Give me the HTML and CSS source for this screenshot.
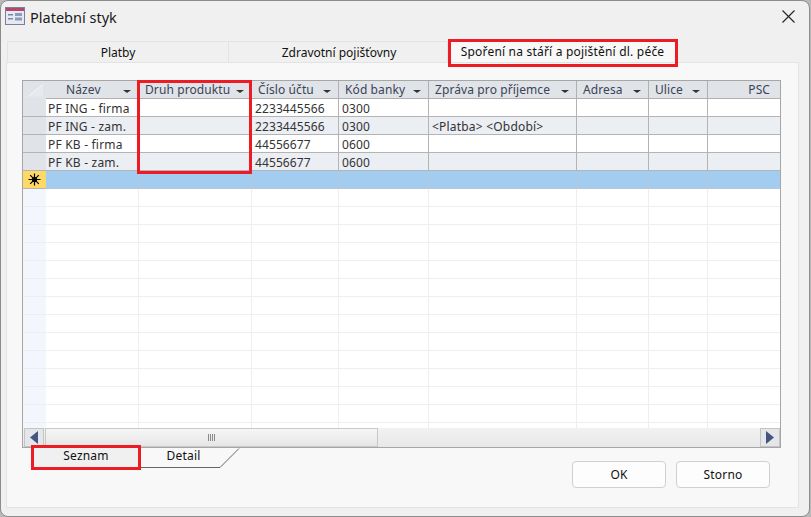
FILE: index.html
```html
<!DOCTYPE html>
<html lang="cs">
<head>
<meta charset="utf-8">
<title>Platební styk</title>
<link rel="stylesheet" href="styles.css">
</head>
<body>
<div class="window">
  <header class="titlebar">
    <svg class="appicon" width="20" height="20" viewBox="0 0 20 20">
      <rect x="0.5" y="1.5" width="19" height="17" fill="#e6e9f2" stroke="#7d7f96"/>
      <rect x="1" y="2" width="18" height="3" fill="#b5476a"/>
      <rect x="3" y="8" width="5" height="1.5" fill="#7b87a8"/>
      <rect x="3" y="12" width="5" height="1.5" fill="#7b87a8"/>
      <rect x="10" y="7" width="7" height="3" fill="#8b9bb8"/>
      <rect x="10" y="11.5" width="7" height="3" fill="#8b9bb8"/>
    </svg>
    <span class="title">Platební styk</span>
    <svg class="close" width="13" height="13" viewBox="0 0 13 13"><path d="M.5.5l12 12M12.5.5l-12 12" stroke="#222" stroke-width="1.1" fill="none"/></svg>
  </header>
  <nav class="tabs">
    <div class="tab tab-a">Platby</div>
    <div class="tab tab-b">Zdravotní pojišťovny</div>
    <div class="tab tab-c active">Spoření na stáří a pojištění dl. péče</div>
  </nav>
  <main class="panel">
    <div class="grid">
      <table class="sheet">
        <colgroup>
          <col class="c0"><col class="c1"><col class="c2"><col class="c3"><col class="c4"><col class="c5"><col class="c6"><col class="c7"><col class="c8">
        </colgroup>
        <thead>
          <tr>
            <th class="corner"><svg width="17" height="13" viewBox="0 0 17 13"><path d="M1 12.5L16 .5v12z" fill="#e6e9ee"/><path d="M1 12.5L16 .5" stroke="#f5f6f8"/></svg></th>
            <th class="ctr">Název<i class="arrow"></i></th>
            <th>Druh produktu<i class="arrow"></i></th>
            <th>Číslo účtu<i class="arrow"></i></th>
            <th>Kód banky<i class="arrow"></i></th>
            <th>Zpráva pro příjemce<i class="arrow"></i></th>
            <th>Adresa<i class="arrow"></i></th>
            <th>Ulice<i class="arrow"></i></th>
            <th class="rgt">PSC</th>
          </tr>
        </thead>
        <tbody>
          <tr><th class="sel"></th><td class="name">PF ING - firma</td><td></td><td class="num">2233445566</td><td class="num">0300</td><td></td><td></td><td></td><td></td></tr>
          <tr class="alt"><th class="sel"></th><td class="name">PF ING - zam.</td><td></td><td class="num">2233445566</td><td class="num">0300</td><td>&lt;Platba&gt; &lt;Období&gt;</td><td></td><td></td><td></td></tr>
          <tr><th class="sel"></th><td class="name">PF KB - firma</td><td></td><td class="num">44556677</td><td class="num">0600</td><td></td><td></td><td></td><td></td></tr>
          <tr class="alt"><th class="sel"></th><td class="name">PF KB - zam.</td><td></td><td class="num">44556677</td><td class="num">0600</td><td></td><td></td><td></td><td></td></tr>
          <tr class="new"><th class="sel star"><svg width="13" height="13" viewBox="0 0 13 13"><path d="M6.5 .5v12M.5 6.5h12M2.2 2.2l8.6 8.6M10.8 2.2l-8.6 8.6" stroke="#000" stroke-width="1.2"/><circle cx="6.5" cy="6.5" r="2.6"/></svg></th><td></td><td></td><td></td><td></td><td></td><td></td><td></td><td></td></tr>
          <tr class="blank"><th class="sel"></th><td></td><td></td><td></td><td></td><td></td><td></td><td></td><td></td></tr>
          <tr class="blank"><th class="sel"></th><td></td><td></td><td></td><td></td><td></td><td></td><td></td><td></td></tr>
          <tr class="blank"><th class="sel"></th><td></td><td></td><td></td><td></td><td></td><td></td><td></td><td></td></tr>
          <tr class="blank"><th class="sel"></th><td></td><td></td><td></td><td></td><td></td><td></td><td></td><td></td></tr>
          <tr class="blank"><th class="sel"></th><td></td><td></td><td></td><td></td><td></td><td></td><td></td><td></td></tr>
          <tr class="blank"><th class="sel"></th><td></td><td></td><td></td><td></td><td></td><td></td><td></td><td></td></tr>
          <tr class="blank"><th class="sel"></th><td></td><td></td><td></td><td></td><td></td><td></td><td></td><td></td></tr>
          <tr class="blank"><th class="sel"></th><td></td><td></td><td></td><td></td><td></td><td></td><td></td><td></td></tr>
          <tr class="blank"><th class="sel"></th><td></td><td></td><td></td><td></td><td></td><td></td><td></td><td></td></tr>
          <tr class="blank"><th class="sel"></th><td></td><td></td><td></td><td></td><td></td><td></td><td></td><td></td></tr>
          <tr class="blank"><th class="sel"></th><td></td><td></td><td></td><td></td><td></td><td></td><td></td><td></td></tr>
          <tr class="blank"><th class="sel"></th><td></td><td></td><td></td><td></td><td></td><td></td><td></td><td></td></tr>
          <tr class="blank"><th class="sel"></th><td></td><td></td><td></td><td></td><td></td><td></td><td></td><td></td></tr>
          <tr class="blank last"><th class="sel"></th><td></td><td></td><td></td><td></td><td></td><td></td><td></td><td></td></tr>
        </tbody>
      </table>
      <div class="hscroll">
        <button class="sb-btn"><svg width="8" height="13" viewBox="0 0 8 13"><path d="M8 0v13L0 6.5z" fill="#44557f"/></svg></button>
        <div class="thumb"><svg width="8" height="7" viewBox="0 0 8 7"><path d="M.5 0v7M2.5 0v7M4.5 0v7M6.5 0v7" stroke="#8a8a8a"/></svg></div>
        <div class="track"></div>
        <button class="sb-btn"><svg width="8" height="13" viewBox="0 0 8 13"><path d="M0 0v13l8-6.5z" fill="#44557f"/></svg></button>
      </div>
    </div>
    <div class="footer">
      <div class="subtabs">
        <div class="subtab on">Seznam</div>
        <div class="subtab off">Detail
          <svg class="slant" width="22" height="21" viewBox="0 0 22 21"><path d="M0 20.5h2L21 1.5" fill="none" stroke="#666"/></svg>
        </div>
      </div>
      <div class="buttons">
        <button class="btn">OK</button>
        <button class="btn">Storno</button>
      </div>
    </div>
    <div class="mark mark-tab"></div>
    <div class="mark mark-col"></div>
    <div class="mark mark-sub"></div>
  </main>
</div>
</body>
</html>
```
FILE: styles.css
```css
* { box-sizing: border-box; }
html, body { margin: 0; height: 100%; }
body {
  background: #b9b9b9;
  font-family: "Noto Sans", "DejaVu Sans", sans-serif;
  font-size: 12px;
  letter-spacing: .2px;
  color: #111;
  overflow: hidden;
}
.window {
  width: 810px;
  height: 517px;
  background: #f0f0f0;
  border: 1px solid #8c8c8c;
  border-radius: 8px;
  display: flex;
  flex-direction: column;
  padding: 0 10px 8px 5px;
}
.titlebar {
  height: 40px;
  flex: none;
  display: flex;
  align-items: flex-start;
  padding-top: 5px;
  margin-right: -9px;
}
.appicon { margin-right: 5px; margin-left: -1px; }
.title { font-size: 14.5px; line-height: 22px; color: #1a1a1a; letter-spacing: 0; }
.close { margin-left: auto; margin-top: 4px; margin-right: 13px; }
.tabs { display: flex; height: 21px; flex: none; padding-left: 1px; }
.tab {
  text-align: center;
  line-height: 20px;
  padding-top: 1px;
  letter-spacing: 0;
  background: #f0f0f0;
  border: 1px solid #e3e3e3;
  border-bottom: 0;
  border-left: 0;
}
.tab-a { width: 222px; border-left: 1px solid #e3e3e3; }
.tab-b { width: 219px; padding-left: 2px; }
.tab-c { width: 229px; }
.tab.active { background: #f8f8f8; border: 0; position: relative; margin-bottom: -1px; line-height: 17px; height: 22px; padding-top: 2px; letter-spacing: .2px; }
.panel {
  position: relative;
  flex: 1;
  background: #f8f8f8;
  border: 1px solid #e3e3e3;
  padding: 17px 18px 0 15px;
}
.grid { width: 759px; border: 1px solid #a6a6a6; background: #fff; }
.sheet {
  width: 757px;
  table-layout: fixed;
  border-collapse: separate;
  border-spacing: 0;
}
.c0 { width: 23px; } .c1 { width: 93px; } .c2 { width: 113px; } .c3 { width: 87px; }
.c4 { width: 90px; } .c5 { width: 148px; } .c6 { width: 72px; } .c7 { width: 59px; } .c8 { width: 72px; }
.sheet thead th {
  height: 18px;
  padding: 0 0 0 6px;
  background: #e0e3e8;
  border-right: 1px solid #b0b0b0;
  border-bottom: 1px solid #b0b0b0;
  font-weight: 400;
  font-size: 12px;
  letter-spacing: .1px;
  color: #3b4456;
  text-align: left;
  line-height: 16px;
  position: relative;
  white-space: nowrap;
}
.sheet thead th.corner { padding: 0; border-right: 0; border-bottom: 0; vertical-align: middle; }
.corner svg { display: block; margin-left: 4px; }
.sheet thead th.ctr { padding-left: 20px; }
.sheet thead th.rgt { text-align: right; padding: 0 10px 0 0; border-right: 0; }
.arrow {
  position: absolute;
  right: 7px;
  top: 9px;
  width: 0;
  height: 0;
  border-left: 4px solid transparent;
  border-right: 4px solid transparent;
  border-top: 3px solid #333;
}
.sheet td {
  height: 18px;
  padding: 3px 0 0 3px;
  border-right: 1px solid #b4b4b4;
  border-bottom: 1px solid #b4b4b4;
  font-size: 12px;
  line-height: 14px;
  color: #333;
  background: #fff;
  white-space: nowrap;
  overflow: hidden;
}
.sheet td.name { padding-left: 2px; }
.sheet td.num { letter-spacing: .1px; }
.sheet td:last-child { border-right: 0; }
.sheet .sel {
  height: 18px;
  padding: 0;
  background: #e0e3e8;
  border-bottom: 1px solid #b4b4b4;
  font-weight: 400;
}
.sheet .alt td { background: #ebeef3; }
.sheet .new td { background: #a3cdf0; border-color: #b8c8d8; }
.sheet .new .star { background: #ffd966; border-bottom-color: #b4b4b4; text-align: center; }
.star svg { display: block; margin: 0 auto; }
.sheet .blank td { border-color: #eeeeee; }
.sheet .blank .sel { background: #f4f6fd; border-bottom-color: #eeeeee; }
.sheet .blank.last td, .sheet .blank.last .sel { height: 5px; padding: 0; line-height: 0; border-bottom: 0; }
.hscroll {
  display: flex;
  height: 19px;
  align-items: stretch;
  background: linear-gradient(#f2f2f2, #e8e8e8);
  padding-left: 1px;
}
.sb-btn {
  width: 20px;
  padding: 0;
  margin: 0;
  background: #e4e6ea;
  border: 1px solid #c4c4c4;
  display: flex;
  align-items: center;
  justify-content: center;
}
.thumb {
  width: 333px;
  margin-left: 1px;
  background: linear-gradient(#f6f6f6, #e6e6e6);
  border: 1px solid #c8c8c8;
  display: flex;
  align-items: center;
  justify-content: center;
}
.track { flex: 1; }
.footer { display: flex; justify-content: space-between; }
.subtabs { display: flex; margin-left: 11px; height: 20px; }
.subtab { line-height: 15px; text-align: center; }
.subtab.on {
  width: 106px;
  background: #f0f0f0;
  border-bottom: 1px solid #a6a6a6;
  color: #111;
}
.subtab.off {
  width: 80px;
  padding-left: 9px;
  position: relative;
  border-bottom: 1px solid #666;
}
.slant { position: absolute; left: 79px; top: -1px; }
.buttons { display: flex; gap: 10px; margin-top: 13px; margin-right: 10px; }
.btn {
  width: 94px;
  height: 27px;
  font: 12px "Noto Sans", "DejaVu Sans", sans-serif;
  letter-spacing: .2px;
  color: #111;
  background: #fdfdfd;
  border: 1px solid #d0d0d0;
  border-radius: 4px;
  padding: 0;
}
.mark { position: absolute; border: 3px solid #ed1c24; z-index: 2; }
.mark-tab { left: 441px; top: -24px; width: 230px; height: 28px; }
.mark-col { left: 130px; top: 17px; width: 115px; height: 94px; }
.mark-sub { left: 24px; top: 382px; width: 110px; height: 25px; }
```
